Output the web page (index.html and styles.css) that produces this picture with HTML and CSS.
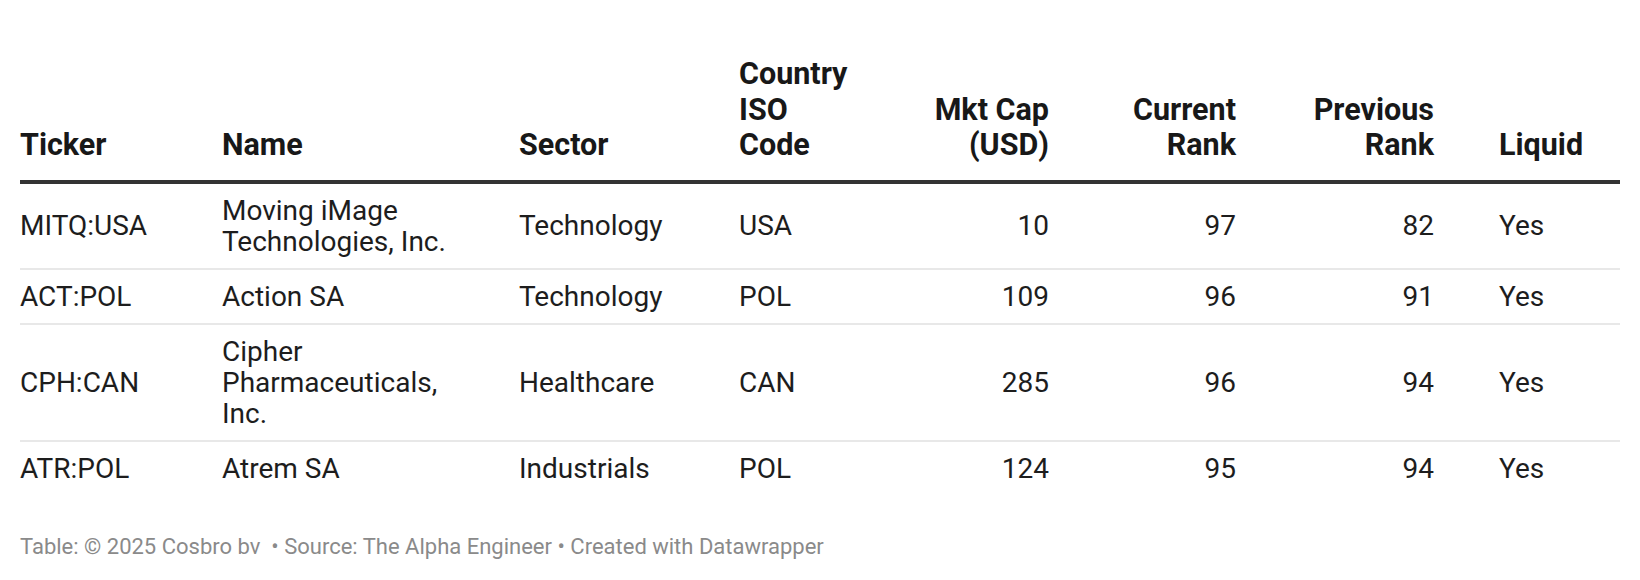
FILE: index.html
```html
<!DOCTYPE html>
<html>
<head>
<meta charset="utf-8">
<link rel="stylesheet" href="styles.css">
</head>
<body>
<div class="chart">
  <table class="tbl">
    <colgroup>
      <col class="c-ticker"><col class="c-name"><col class="c-sector"><col class="c-country">
      <col class="c-cap"><col class="c-cur"><col class="c-prev"><col class="c-liq">
    </colgroup>
    <thead>
      <tr>
        <th class="l">Ticker</th>
        <th class="l name">Name</th>
        <th class="l">Sector</th>
        <th class="l country">Country ISO Code</th>
        <th class="r cap">Mkt Cap (USD)</th>
        <th class="r rank">Current Rank</th>
        <th class="r rank">Previous Rank</th>
        <th class="l liq">Liquid</th>
      </tr>
    </thead>
    <tbody>
      <tr>
        <td class="l">MITQ:USA</td>
        <td class="l name">Moving iMage Technologies, Inc.</td>
        <td class="l">Technology</td>
        <td class="l country">USA</td>
        <td class="r cap">10</td>
        <td class="r rank">97</td>
        <td class="r rank">82</td>
        <td class="l liq">Yes</td>
      </tr>
      <tr>
        <td class="l">ACT:POL</td>
        <td class="l name">Action SA</td>
        <td class="l">Technology</td>
        <td class="l country">POL</td>
        <td class="r cap">109</td>
        <td class="r rank">96</td>
        <td class="r rank">91</td>
        <td class="l liq">Yes</td>
      </tr>
      <tr>
        <td class="l">CPH:CAN</td>
        <td class="l name">Cipher Pharmaceuticals, Inc.</td>
        <td class="l">Healthcare</td>
        <td class="l country">CAN</td>
        <td class="r cap">285</td>
        <td class="r rank">96</td>
        <td class="r rank">94</td>
        <td class="l liq">Yes</td>
      </tr>
      <tr class="last">
        <td class="l">ATR:POL</td>
        <td class="l name">Atrem SA</td>
        <td class="l">Industrials</td>
        <td class="l country">POL</td>
        <td class="r cap">124</td>
        <td class="r rank">95</td>
        <td class="r rank">94</td>
        <td class="l liq">Yes</td>
      </tr>
    </tbody>
  </table>
  <div class="footer">Table: © 2025 Cosbro bv&nbsp; • Source: The Alpha Engineer • Created with Datawrapper</div>
</div>
</body>
</html>
```
FILE: styles.css
```css
html, body {
  margin: 0;
  padding: 0;
  background: #ffffff;
}
body {
  font-family: Roboto, "Liberation Sans", Arial, sans-serif;
  color: #1d1d1d;
}
.chart {
  padding: 40px 20px 0 20px;
}
.tbl {
  width: 1600px;
  table-layout: fixed;
  border-collapse: collapse;
}
.c-ticker { width: 202px; }
.c-name { width: 297px; }
.c-sector { width: 220px; }
.c-country { width: 131px; }
.c-cap { width: 179px; }
.c-cur { width: 187px; }
.c-prev { width: 198px; }
.c-liq { width: 186px; }

.tbl th {
  font-weight: 700;
  font-size: 30.5px;
  line-height: 35.5px;
  color: #181818;
  vertical-align: bottom;
  padding: 16px 0 17px 0;
  border-bottom: 4px solid #333333;
}
.tbl td {
  font-weight: 400;
  font-size: 28px;
  line-height: 31px;
  vertical-align: middle;
  padding: 11px 0;
  border-bottom: 2px solid #e8e8e8;
}
.tbl tr.last td {
  border-bottom: none;
}
.l { text-align: left; }
.r { text-align: right; }
.tbl .name { padding-right: 57px; }
.tbl .country { padding-right: 13px; }
.tbl .cap { padding-left: 40px; }
.tbl .rank { padding-left: 60px; }
.tbl .liq { padding-left: 65px; }

.footer {
  margin-top: 38px;
  font-size: 22px;
  line-height: 28px;
  color: #8a8a8a;
}
```
